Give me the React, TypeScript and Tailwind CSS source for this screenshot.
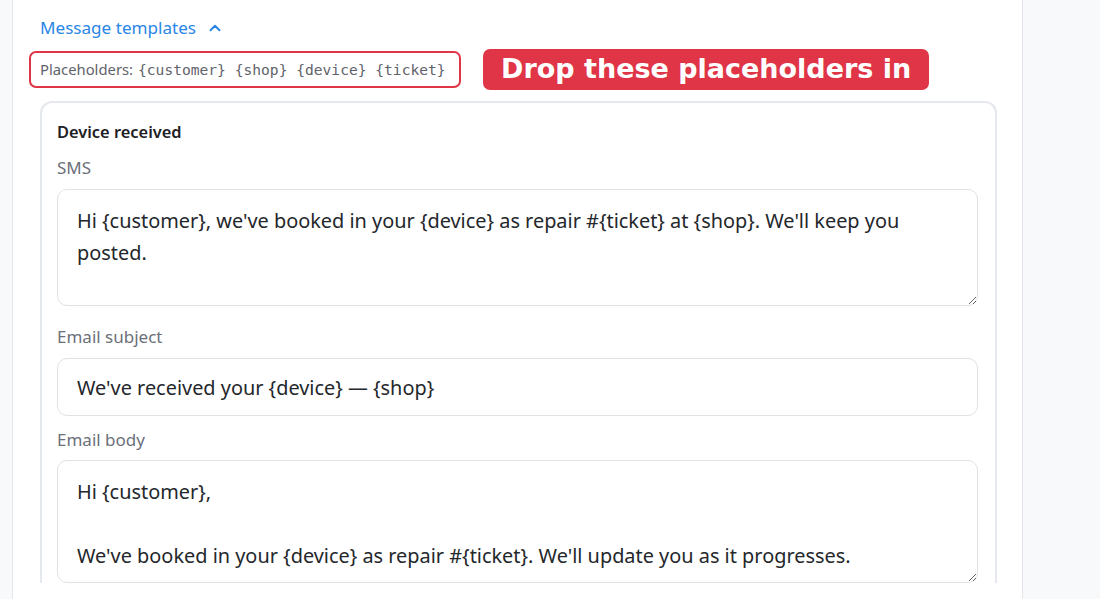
import { ChevronUp } from 'lucide-react'

const sans = "font-['Noto_Sans',sans-serif]"

const smsText =
  "Hi {customer}, we've booked in your {device} as repair #{ticket} at {shop}. We'll keep you posted."

const emailSubject = "We've received your {device} — {shop}"

const emailBody =
  "Hi {customer},\n\nWe've booked in your {device} as repair #{ticket}. We'll update you as it progresses."

const fieldClass =
  'block w-full rounded-[10px] border border-[#dfe2e7] bg-white px-[19px] text-[19.9px] leading-[32px] text-[#24272b] outline-none'

const App = () => {
  return (
    <div className={`flex h-[599px] w-[1100px] overflow-hidden bg-[#f8f9fb] ${sans}`}>
      <div className="w-[12px] shrink-0" />

      {/* 设置面板 */}
      <main className="w-[1011px] shrink-0 border-x border-[#e3e6ea] bg-white pl-[16px]">
        <button className="mt-[16px] flex items-center gap-[10px] pl-[11px] text-[17.1px] leading-[24px] text-[#2a86e6]">
          Message templates
          <ChevronUp size={18} strokeWidth={2.6} />
        </button>

        <div className="mt-[9px] flex items-center gap-[22px]">
          <div className="flex h-[37px] w-[432px] items-center rounded-[7px] border-2 border-[#e03546] pl-[9px] text-[14.8px] text-[#5f636b]">
            <span>Placeholders:</span>
            <span className="ml-[5px] font-['DejaVu_Sans_Mono',monospace] text-[14.6px]">
              {'{customer} {shop} {device} {ticket}'}
            </span>
          </div>
          <div className="flex h-[41px] items-center rounded-[7px] bg-[#e03546] px-[18px] font-['DejaVu_Sans',sans-serif] text-[27px] font-bold text-white">
            Drop these placeholders in
          </div>
        </div>

        {/* 模板卡片 */}
        <section className="ml-[11px] mt-[11px] w-[957px] rounded-t-[12px] border-x-2 border-t-2 border-[#e5e8ec] pl-[15px] pr-[17px] pt-[16px]">
          <h3 className="text-[16.4px] font-semibold leading-[26px] text-[#1d2024]">Device received</h3>

          <label className="mt-[11px] block text-[17px] leading-[24px] text-[#6b7079]">SMS</label>
          <textarea
            readOnly
            defaultValue={smsText}
            className={`${fieldClass} mt-[9px] h-[117px] resize-y pt-[15px]`}
          />

          <label className="mt-[19px] block text-[17px] leading-[24px] text-[#6b7079]">Email subject</label>
          <input readOnly value={emailSubject} className={`${fieldClass} mt-[9px] h-[58px]`} />

          <label className="mt-[12px] block text-[17px] leading-[24px] text-[#6b7079]">Email body</label>
          <textarea
            readOnly
            defaultValue={emailBody}
            className={`${fieldClass} mt-[8px] h-[123px] resize-y pt-[15px]`}
          />
        </section>
      </main>
    </div>
  )
}

export default App
